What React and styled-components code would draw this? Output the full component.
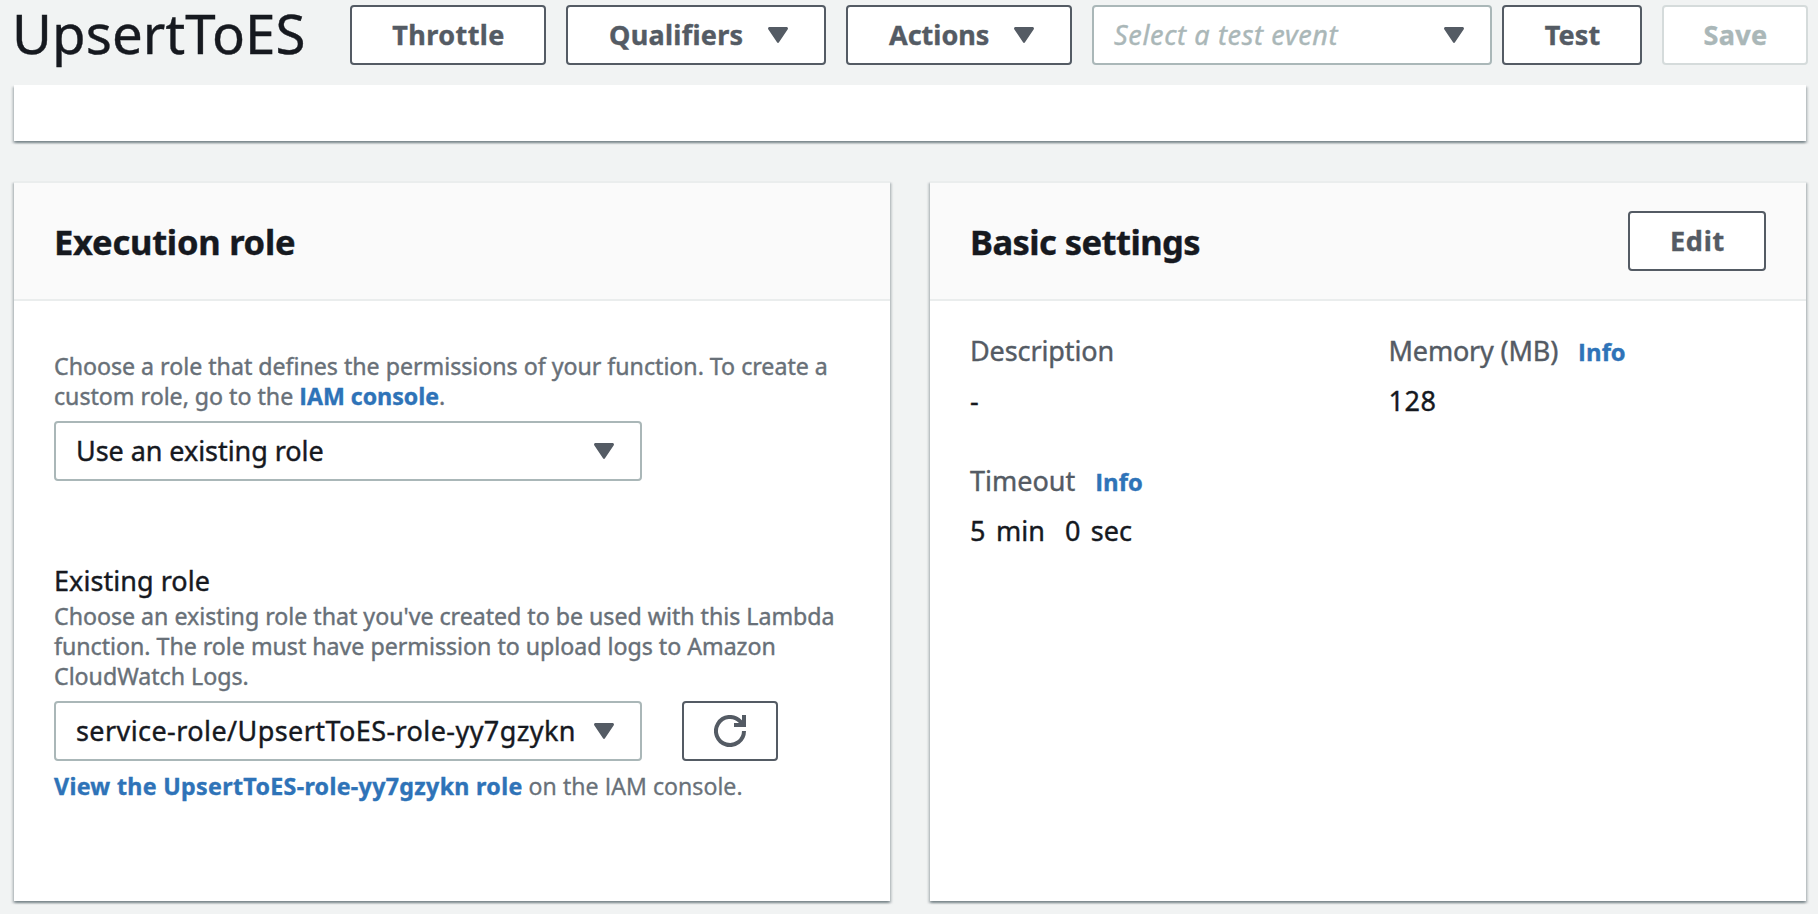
import React from 'react';
import styled, { createGlobalStyle } from 'styled-components';

const color = {
  page: '#f1f3f3',
  ink: '#16191f',
  label: '#545b64',
  hint: '#687078',
  link: '#2e73b8',
  inputBorder: '#aab7b8',
  divider: '#eaeded',
  disabledBorder: '#d5dbdb',
};

const GlobalStyle = createGlobalStyle`
  *, *::before, *::after { box-sizing: border-box; }
  html { background: ${color.page}; }
  body {
    margin: 0;
    height: 914px;
    overflow: hidden;
    background: ${color.page};
    color: ${color.ink};
    font-family: "Noto Sans", "Open Sans", sans-serif;
    font-size: 27px;
    line-height: 44px;
    -webkit-text-stroke: 0.4px currentColor;
  }
`;

const Page = styled.div`
  display: flex;
  flex-direction: column;
  height: 914px;
`;

const Toolbar = styled.header`
  display: flex;
  align-items: flex-start;
  height: 85px;
  padding: 0 10px 0 12px;
  flex: none;
`;

const Title = styled.h1`
  margin: 0;
  width: 338px;
  flex: none;
  font-size: 54.6px;
  font-weight: 400;
  line-height: 67px;
  letter-spacing: 0.1px;
`;

const Actions = styled.div`
  display: flex;
  gap: 20px;
  padding-top: 5px;
`;

const TestGroup = styled.div`
  display: flex;
  gap: 10px;
`;

const Button = styled.button`
  display: flex;
  align-items: center;
  justify-content: ${(p) => (p.$menu ? 'space-between' : 'center')};
  width: ${(p) => p.$width}px;
  height: 60px;
  flex: none;
  padding: ${(p) => (p.$menu ? '0 36px 0 41px' : '0 0 0 1px')};
  border: 2px solid ${(p) => (p.disabled ? color.disabledBorder : color.label)};
  border-radius: 4px;
  background: #fff;
  color: ${(p) => (p.disabled ? color.inputBorder : color.label)};
  font: inherit;
  font-weight: 700;
  letter-spacing: ${(p) => p.$track ?? 0.3}px;
  line-height: 40px;
  white-space: nowrap;
`;

const IconButton = styled(Button)`
  padding: 0;
`;

const Select = styled.div`
  display: flex;
  align-items: center;
  justify-content: space-between;
  width: ${(p) => p.$width}px;
  height: 60px;
  flex: none;
  padding: 0 26px 0 20px;
  border: 2px solid ${color.inputBorder};
  border-radius: 4px;
  background: #fff;
  line-height: 40px;
  letter-spacing: ${(p) => p.$track ?? 0}px;
  white-space: nowrap;
`;

const Placeholder = styled.span`
  color: ${color.inputBorder};
  font-style: italic;
`;

const panelShadow = `
  box-shadow: 0 2px 2px 0 rgba(0, 28, 36, 0.3), 2px 2px 2px 0 rgba(0, 28, 36, 0.15),
    -2px 2px 2px 0 rgba(0, 28, 36, 0.15);
`;

const Clip = styled.div`
  height: 66px;
  flex: none;
  padding: 0 12px 0 14px;
  overflow: hidden;
`;

const PreviousPanel = styled.div`
  height: 56px;
  background: #fff;
  ${panelShadow}
`;

const Columns = styled.main`
  display: grid;
  grid-template-columns: 1fr 1fr;
  gap: 40px;
  padding: 30px 12px 0 14px;
`;

const Card = styled.section`
  height: 720px;
  background: #fff;
  border-top: 2px solid ${color.divider};
  ${panelShadow}
`;

const CardHeader = styled.div`
  display: flex;
  align-items: center;
  justify-content: space-between;
  height: 118px;
  padding: 0 40px;
  border-bottom: 2px solid ${color.divider};
  background: #fafafa;
`;

const CardTitle = styled.h2`
  margin: 2px 0 0;
  font-size: 34.5px;
  font-weight: 700;
  line-height: 44px;
  letter-spacing: ${(p) => p.$track}px;
`;

const RoleBody = styled.div`
  padding: 50px 40px 0;
`;

const Hint = styled.p`
  margin: 0;
  color: ${color.hint};
  font-size: 23.2px;
  line-height: 30px;
  letter-spacing: -0.02px;
`;

const Link = styled.a`
  color: ${color.link};
  font-weight: 700;
  text-decoration: none;
  letter-spacing: ${(p) => p.$track ?? 0}px;
`;

const OpenText = styled.span`
  font-family: "Open Sans", sans-serif;
  letter-spacing: 0.05px;
`;

const Field = styled.div`
  margin-top: ${(p) => p.$top ?? 0}px;
`;

const FieldLabel = styled.div`
  height: 42px;
  letter-spacing: 0.05px;
`;

const ControlRow = styled.div`
  display: flex;
  gap: 40px;
  margin: 10px 0;
`;

const SettingsGrid = styled.dl`
  display: grid;
  grid-template-columns: 418.5px 1fr;
  row-gap: 30px;
  margin: 0;
  padding: 28px 40px 0;
`;

const Term = styled.dt`
  display: flex;
  align-items: baseline;
  gap: 20px;
  height: 50px;
  color: ${color.label};
  letter-spacing: ${(p) => p.$track ?? 0}px;
`;

const InfoLink = styled.a`
  color: ${color.link};
  font-family: "Open Sans", sans-serif;
  font-size: 23.8px;
  font-weight: 700;
  letter-spacing: 0;
  text-decoration: none;
`;

const Value = styled.dd`
  display: flex;
  gap: 20px;
  margin: 0;
  height: 50px;
  letter-spacing: ${(p) => p.$track ?? 0}px;
`;

const Quantity = styled.span`
  word-spacing: 3.5px;
`;

const Caret = () => (
  <svg width="20" height="16" viewBox="0 0 20 16" fill={color.label} aria-hidden="true">
    <path d="M1.6 0h16.8c1.4 0 2 1.4 1.2 2.4L11 15.2c-.5.9-1.5.9-2 0L.4 2.4C-.4 1.4.2 0 1.6 0z" />
  </svg>
);

const RefreshIcon = () => (
  <svg width="32" height="32" viewBox="0 0 32 32" fill="none" stroke={color.label} strokeWidth="4" aria-hidden="true">
    <path d="M30 16A14 14 0 1 1 26.2 6.4L29 9.5" />
    <path d="M30 0V10H20" />
  </svg>
);

export default function App() {
  return (
    <Page>
      <GlobalStyle />
      <Toolbar>
        <Title>UpsertToES</Title>
        <Actions>
          <Button $width={196} $track={0.45}>Throttle</Button>
          <Button $width={260} $menu>Qualifiers<Caret /></Button>
          <Button $width={226} $menu $track={0}>Actions<Caret /></Button>
          <TestGroup>
            <Select $width={400} $track={0.65}>
              <Placeholder>Select a test event</Placeholder>
              <Caret />
            </Select>
            <Button $width={140} $track={0.1}>Test</Button>
          </TestGroup>
          <Button $width={146} disabled>Save</Button>
        </Actions>
      </Toolbar>
      <Clip>
        <PreviousPanel />
      </Clip>
      <Columns>
        <Card>
          <CardHeader>
            <CardTitle $track={-0.25}>Execution role</CardTitle>
          </CardHeader>
          <RoleBody>
            <Hint>
              Choose a role that defines the permissions of your function. To create a custom role, go to the{' '}
              <OpenText><Link href="#">IAM console</Link></OpenText>.
            </Hint>
            <ControlRow>
              <Select $width={588} $track={-0.06}>Use an existing role<Caret /></Select>
            </ControlRow>
            <Field $top={78}>
              <FieldLabel>Existing role</FieldLabel>
              <Hint>
                Choose an existing role that you've created to be used with this Lambda function. The role must
                have permission to upload logs to Amazon CloudWatch Logs.
              </Hint>
              <ControlRow>
                <Select $width={588} $track={0.42}>service-role/UpsertToES-role-yy7gzykn<Caret /></Select>
                <IconButton $width={96} aria-label="Refresh"><RefreshIcon /></IconButton>
              </ControlRow>
              <Hint>
                <Link href="#" $track={0.33}>View the UpsertToES-role-yy7gzykn role</Link>{' '}
                <OpenText>on the IAM console.</OpenText>
              </Hint>
            </Field>
          </RoleBody>
        </Card>
        <Card>
          <CardHeader>
            <CardTitle $track={-0.55}>Basic settings</CardTitle>
            <Button $width={138} $track={0.8}>Edit</Button>
          </CardHeader>
          <SettingsGrid>
            <div>
              <Term $track={-0.1}>Description</Term>
              <Value>-</Value>
            </div>
            <div>
              <Term $track={-0.17}>Memory (MB)<InfoLink href="#">Info</InfoLink></Term>
              <Value $track={0.6}>128</Value>
            </div>
            <div>
              <Term>Timeout<InfoLink href="#">Info</InfoLink></Term>
              <Value><Quantity>5 min</Quantity><Quantity>0 sec</Quantity></Value>
            </div>
          </SettingsGrid>
        </Card>
      </Columns>
    </Page>
  );
}
